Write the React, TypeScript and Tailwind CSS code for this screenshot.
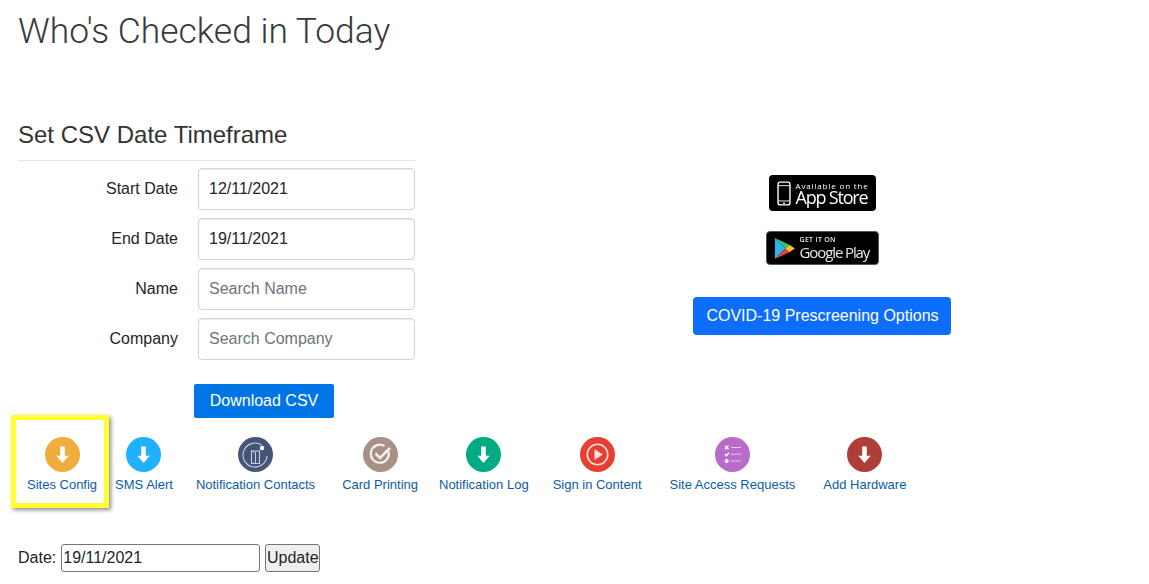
import React from "react";

const sans = "font-['Liberation_Sans',Arial,sans-serif]";

const DownloadIcon = ({ bg }: { bg: string }) => (
  <svg viewBox="0 0 35 35" className="w-[35px] h-[35px] block">
    <circle cx="17.5" cy="17.5" r="17.5" fill={bg} />
    <path d="M15.2 9.5h4.6v9.3h3.9l-6.2 7.2-6.2-7.2h3.9z" fill="#fff" />
  </svg>
);

const DoorIcon = () => (
  <svg viewBox="0 0 35 35" className="w-[35px] h-[35px] block">
    <circle cx="17.5" cy="17.5" r="17.5" fill="#445577" />
    <path d="M23.5 8A12 12 0 1 0 29 19" fill="none" stroke="#c9d0dc" strokeWidth="1.1" />
    <circle cx="24" cy="11" r="2.2" fill="#fff" />
    <path d="M13.5 14h8v12.5h-8z" fill="none" stroke="#c9d0dc" strokeWidth="1.1" />
    <path d="M13.5 14l4 1.6v10.9" fill="none" stroke="#c9d0dc" strokeWidth="1" />
  </svg>
);

const CheckIcon = () => (
  <svg viewBox="0 0 35 35" className="w-[35px] h-[35px] block">
    <circle cx="17.5" cy="17.5" r="17.5" fill="#a79186" />
    <path d="M25.5 14.5a9 9 0 1 1-4-5.4" fill="none" stroke="#f4f0ee" strokeWidth="2.2" />
    <path d="M12.5 16.5l4.5 4.5 10-10" fill="none" stroke="#f4f0ee" strokeWidth="2.6" />
  </svg>
);

const PlayIcon = () => (
  <svg viewBox="0 0 35 35" className="w-[35px] h-[35px] block">
    <circle cx="17.5" cy="17.5" r="17.5" fill="#e83f33" />
    <circle cx="17.5" cy="17.5" r="10.2" fill="none" stroke="#fbe3e1" strokeWidth="1.6" />
    <path d="M14.5 12.2l8.6 5.3-8.6 5.3z" fill="#fbe3e1" />
  </svg>
);

const ChecklistIcon = () => (
  <svg viewBox="0 0 35 35" className="w-[35px] h-[35px] block">
    <circle cx="17.5" cy="17.5" r="17.5" fill="#b96bcb" />
    <path d="M10 8.8l3.4 3.4M13.4 8.8L10 12.2" stroke="#fff" strokeWidth="1.4" fill="none" />
    <path d="M9.8 17l1.6 1.7 2.6-3" stroke="#fff" strokeWidth="1.4" fill="none" />
    <circle cx="11.7" cy="24" r="2" fill="#fff" />
    <path d="M16 10.5h10M16 17.2h10M16 24h10" stroke="#e6c9ed" strokeWidth="1" fill="none" />
  </svg>
);

const Field = ({ label, value, placeholder }: { label: string; value?: string; placeholder?: string }) => (
  <div className="flex items-center">
    <label className="w-[160px] text-right text-[16px] text-[#212529]">{label}</label>
    <input
      readOnly
      value={value}
      placeholder={placeholder}
      className="ml-[20px] w-[217px] h-[42px] px-[10px] bg-white border border-[#ced4da] rounded-[4px] shadow-[inset_0_1px_1px_rgba(0,0,0,0.08)] text-[16px] text-[#212529] placeholder:text-[#6c757d] outline-none"
    />
  </div>
);

const AppStoreBadge = () => (
  <div className="w-[107px] h-[36px] bg-black rounded-[4px] flex items-center pl-[8px] text-white blur-[0.35px] font-['Open_Sans',sans-serif]">
    <svg viewBox="0 0 16 28" className="w-[14px] h-[25px]">
      <rect x="1.2" y="1" width="13.6" height="26" rx="2.5" fill="none" stroke="#fff" strokeWidth="1.6" />
      <path d="M1.5 5h13M1.5 22.5h13" stroke="#fff" strokeWidth="1" />
      <circle cx="8" cy="25" r="1" fill="#fff" />
    </svg>
    <div className="ml-[5px] flex flex-col">
      <span className="text-[8px] leading-[9px] tracking-[0.85px] whitespace-nowrap">Available on the</span>
      <span className="text-[18px] leading-[15px] font-medium tracking-[-1.2px] whitespace-nowrap">App Store</span>
    </div>
  </div>
);

const GooglePlayBadge = () => (
  <div className="w-[113px] h-[34px] bg-black border border-[#555] rounded-[4px] flex items-center pl-[7px] text-[#e8e8e8] blur-[0.35px] font-['Open_Sans',sans-serif]">
    <svg viewBox="0 0 22 24" className="w-[21px] h-[23px]">
      <path d="M1 1v22l11-11z" fill="#2fb4e9" />
      <path d="M1 1l11 11 4-4z" fill="#35c46f" />
      <path d="M1 23l11-11 4 4z" fill="#e8413f" />
      <path d="M16 8l6 4-6 4-4-4z" fill="#fbc02d" />
    </svg>
    <div className="ml-[5px] flex flex-col">
      <span className="text-[7px] leading-[8px] font-semibold tracking-[0.3px] whitespace-nowrap">GET IT ON</span>
      <span className="text-[15px] leading-[16px] font-medium tracking-[-1.1px] whitespace-nowrap">Google Play</span>
    </div>
  </div>
);

const NavItem = ({ icon, label }: { icon: React.ReactNode; label: string }) => (
  <a className="flex flex-col items-center text-[#0b5ca8] text-[13px] leading-[15px] whitespace-nowrap">
    {icon}
    <span className="mt-[5px]">{label}</span>
  </a>
);

export default function App() {
  return (
    <div className={`${sans} w-[1149px] h-[584px] overflow-hidden bg-white text-[#212529]`}>
      <h1 className="ml-[18px] pt-[10px] h-[121px] font-['Roboto',sans-serif] font-light text-[35.4px] leading-[42px] text-[#373a3c]">
        Who's Checked in Today
      </h1>

      <div className="flex">
        {/* CSV form */}
        <div className="ml-[18px] w-[397px]">
          <h2 className="text-[24px] leading-[28px] pb-[11px] border-b border-[#e5e5e5] text-[#333]">Set CSV Date Timeframe</h2>
          <div className="mt-[7px] flex flex-col gap-[8px]">
            <Field label="Start Date" value="12/11/2021" />
            <Field label="End Date" value="19/11/2021" />
            <Field label="Name" placeholder="Search Name" />
            <Field label="Company" placeholder="Search Company" />
          </div>
          <button className="ml-[176px] mt-[24px] w-[140px] h-[34px] bg-[#0275e6] text-white text-[16px] rounded-[2px]">
            Download CSV
          </button>
        </div>

        {/* Apps and prescreening */}
        <div className="ml-[278px] w-[258px] flex flex-col items-center pt-[54px]">
          <AppStoreBadge />
          <div className="mt-[20px]">
            <GooglePlayBadge />
          </div>
          <button className="mt-[32px] w-[258px] h-[38px] pl-[1px] bg-[#0d6efd] text-white text-[16px] rounded-[4px]">
            COVID-19 Prescreening Options
          </button>
        </div>
      </div>

      {/* Shortcuts */}
      <div className="mt-[19px] ml-[27px] flex items-start">
        <div className="relative">
          <div className="absolute left-[-16px] top-[-22px] w-[98px] h-[93px] border-[5px] border-[#ffff33] shadow-[2px_2px_4px_rgba(0,0,0,0.45)]" />
          <NavItem icon={<DownloadIcon bg="#f0ad3d" />} label="Sites Config" />
        </div>
        <div className="ml-[18px]"><NavItem icon={<DownloadIcon bg="#1fb0ff" />} label="SMS Alert" /></div>
        <div className="ml-[23px]"><NavItem icon={<DoorIcon />} label="Notification Contacts" /></div>
        <div className="ml-[27px]"><NavItem icon={<CheckIcon />} label="Card Printing" /></div>
        <div className="ml-[21px]"><NavItem icon={<DownloadIcon bg="#00ab84" />} label="Notification Log" /></div>
        <div className="ml-[24px]"><NavItem icon={<PlayIcon />} label="Sign in Content" /></div>
        <div className="ml-[28px]"><NavItem icon={<ChecklistIcon />} label="Site Access Requests" /></div>
        <div className="ml-[28px]"><NavItem icon={<DownloadIcon bg="#b03e38" />} label="Add Hardware" /></div>
      </div>

      <div className="mt-[52px] ml-[18px] flex items-center text-[16px] text-[#212529]">
        <span>Date:</span>
        <input
          readOnly
          value="19/11/2021"
          className="ml-[5px] w-[199px] h-[28px] px-[1px] border border-[#767676] rounded-[3px] text-[16px] text-[#212529] outline-none"
        />
        <button className="ml-[5px] w-[55px] h-[28px] bg-[#efefef] border border-[#767676] rounded-[3px] text-[16px]">Update</button>
      </div>
    </div>
  );
}
